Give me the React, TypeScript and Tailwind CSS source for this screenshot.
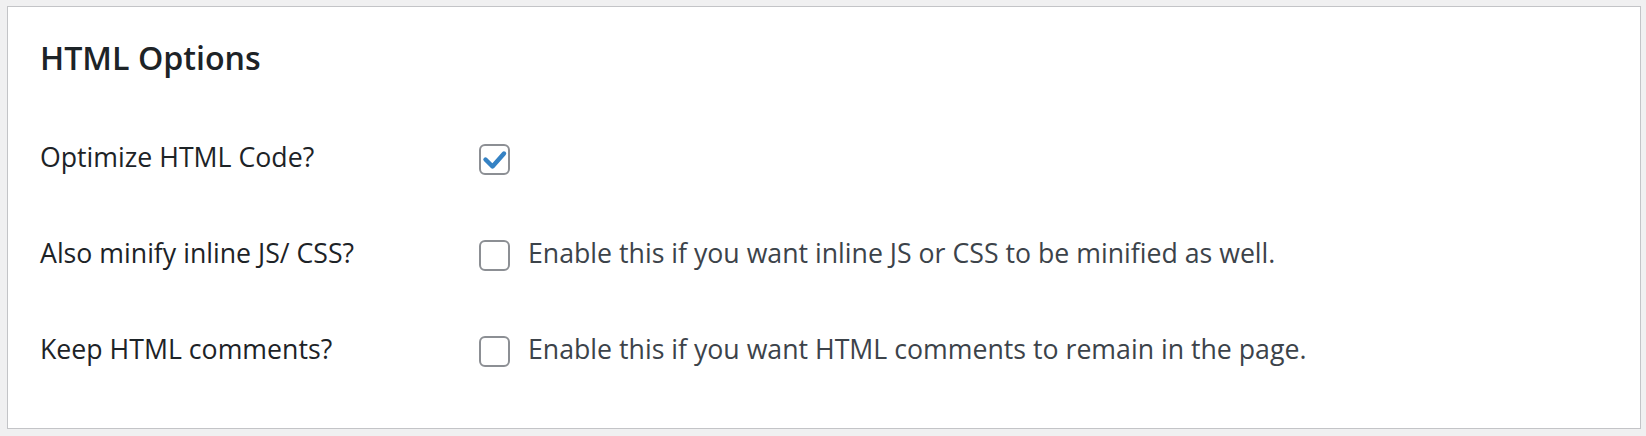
import type { ReactNode } from 'react';

interface Row {
  label: string;
  checked?: boolean;
  description?: string;
}

const ROWS: Row[] = [
  { label: 'Optimize HTML Code?', checked: true },
  {
    label: 'Also minify inline JS/ CSS?',
    description: 'Enable this if you want inline JS or CSS to be minified as well.',
  },
  {
    label: 'Keep HTML comments?',
    description: 'Enable this if you want HTML comments to remain in the page.',
  },
];

function Checkbox({ checked }: { checked?: boolean }) {
  return (
    <span className="mt-[5px] w-[31px] h-[31px] shrink-0 rounded-[6px] border-2 border-[#8c8f94] bg-white flex items-center justify-center">
      {checked && (
        <svg width="27" height="27" viewBox="0 0 27 27" fill="none">
          <path
            d="M4.5 13.5 L11.5 20.5 L23 7.5"
            stroke="#3582c4"
            strokeWidth="4.4"
            strokeLinecap="round"
            strokeLinejoin="round"
          />
        </svg>
      )}
    </span>
  );
}

function OptionRow({ row, children }: { row: Row; children?: ReactNode }) {
  return (
    <div className="flex items-start h-[36px]">
      <div className="w-[439px] shrink-0 text-[26.7px] leading-[36px] text-[#1d2327]">
        {row.label}
      </div>
      <Checkbox checked={row.checked} />
      {row.description && (
        <span className="ml-[18px] text-[26.7px] leading-[36px] text-[#3c434a]">
          {row.description}
        </span>
      )}
      {children}
    </div>
  );
}

export default function App() {
  return (
    <div
      className="w-[1646px] h-[436px] bg-[#f0f0f1] pt-[6px] pl-[7px]"
      style={{ fontFamily: '"Open Sans", "Noto Sans", sans-serif' }}
    >
      <div className="w-[1634px] h-[423px] bg-white border border-[#c3c4c7] pl-[32px] pt-[29px]">
        <h2 className="text-[32.2px] leading-[44px] font-semibold text-[#1d2327]">
          HTML Options
        </h2>
        <div className="mt-[59px] flex flex-col gap-[60px]">
          {ROWS.map((row) => (
            <OptionRow key={row.label} row={row} />
          ))}
        </div>
      </div>
    </div>
  );
}
